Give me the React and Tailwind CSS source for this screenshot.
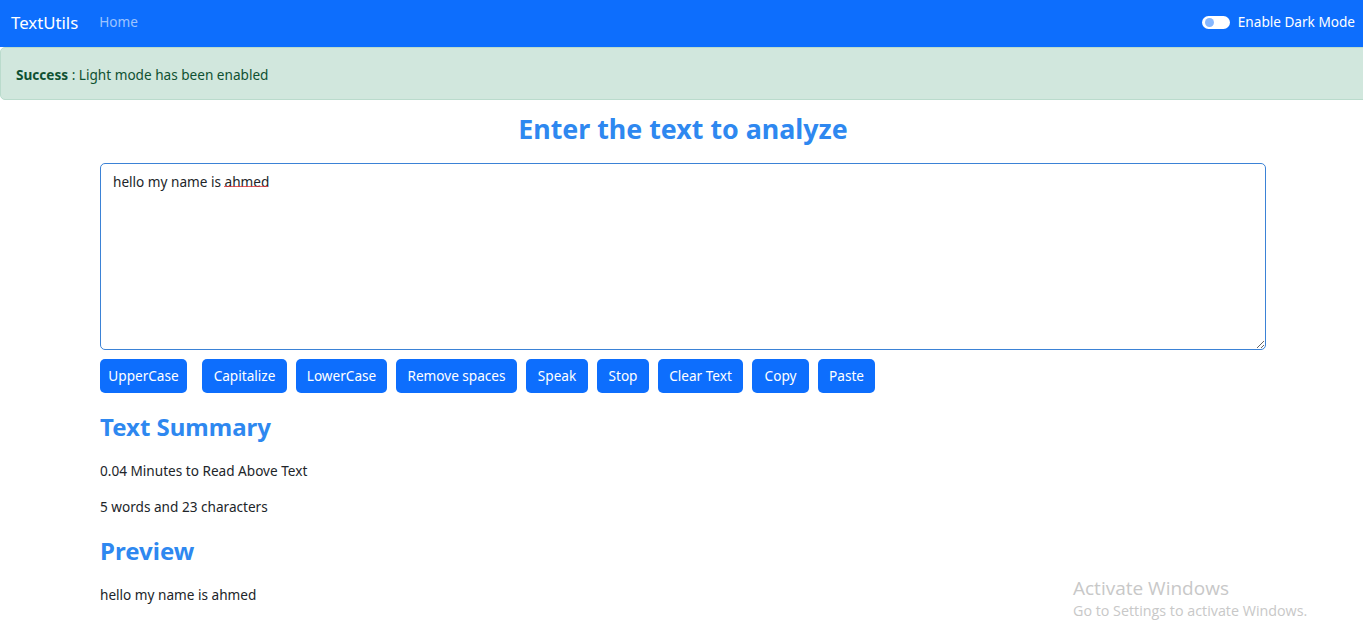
import React, { useState } from "react";

const font = { fontFamily: '"Noto Sans", "Open Sans", sans-serif' };

const buttons = [
  { label: "UpperCase", w: "w-[87px] mr-[6px]" },
  { label: "Capitalize", w: "w-[85px]" },
  { label: "LowerCase", w: "w-[91px]" },
  { label: "Remove spaces", w: "w-[121px]" },
  { label: "Speak", w: "w-[62px]" },
  { label: "Stop", w: "w-[52px]" },
  { label: "Clear Text", w: "w-[85px]" },
  { label: "Copy", w: "w-[57px]" },
  { label: "Paste", w: "w-[57px]" },
];

export default function App() {
  const [text, setText] = useState("hello my name is ahmed ");
  const words = text.split(/\s+/).filter((w) => w.length !== 0).length;

  return (
    <div className="relative min-h-[633px] bg-white text-[13.6px] text-[#212529]" style={font}>
      {/* Navbar */}
      <nav className="flex h-[47px] items-center bg-[#0d6efd] pb-[2px] pl-[11px] pr-[8px]">
        <span className="text-[16.8px] text-white">TextUtils</span>
        <span className="ml-[21px] text-[13.6px] text-white/60">Home</span>
        <div className="ml-auto flex items-center gap-[8px]">
          <span className="relative h-[13px] w-[28px] rounded-full bg-white">
            <span className="absolute left-[3px] top-[2px] h-[9px] w-[9px] rounded-full bg-[#86b7fe]" />
          </span>
          <span className="text-[13.6px] text-white">Enable Dark Mode</span>
        </div>
      </nav>

      {/* Alert */}
      <div className="mr-[-6px] flex h-[53px] items-center rounded-[5px] border border-[#badbcc] bg-[#d1e7dd] px-[15px] pt-[3px] text-[#0f5132]">
        <strong className="font-bold">Success</strong>
        <span>&nbsp;: Light mode has been enabled</span>
      </div>

      {/* Main */}
      <div className="ml-[100px] w-[1166px]">
        <h1 className="mt-[9px] text-center text-[26.8px] font-bold leading-[40px] text-[#2e88f0]">
          Enter the text to analyze
        </h1>
        <div className="relative mt-[14px]">
          <textarea
            value={text}
            onChange={(e) => setText(e.target.value)}
            spellCheck={false}
            className="block h-[187px] w-full resize-y rounded-[5px] border border-[#3b82d6] px-[12px] py-[7px] text-[13.6px] leading-[21px] text-[#212529] outline-none"
            style={font}
          />
          {/* spellcheck squiggle */}
          <svg className="pointer-events-none absolute left-[124px] top-[22px]" width="44" height="3" viewBox="0 0 44 3">
            <path d="M0 2 L1 1 L2 2 L3 1 L4 2 L5 1 L6 2 L7 1 L8 2 L9 1 L10 2 L11 1 L12 2 L13 1 L14 2 L15 1 L16 2 L17 1 L18 2 L19 1 L20 2 L21 1 L22 2 L23 1 L24 2 L25 1 L26 2 L27 1 L28 2 L29 1 L30 2 L31 1 L32 2 L33 1 L34 2 L35 1 L36 2 L37 1 L38 2 L39 1 L40 2 L41 1 L42 2 L43 1 L44 2" fill="none" stroke="#e0393e" strokeWidth="0.8" />
          </svg>
        </div>
        <div className="mt-[9px] flex gap-[9px]">
          {buttons.map((b) => (
            <button
              key={b.label}
              className={`h-[34px] whitespace-nowrap rounded-[5px] bg-[#0d6efd] text-center text-[13.6px] text-white ${b.w}`}
              style={font}
            >
              {b.label}
            </button>
          ))}
        </div>

        <h2 className="mt-[17px] text-[24px] font-bold leading-[34px] text-[#2e88f0]">Text Summary</h2>
        <p className="mt-[16px] leading-[21px]">
          {(0.008 * words).toFixed(2)} Minutes to Read Above Text
        </p>
        <p className="mt-[15px] leading-[21px]">
          {words} words and {text.length} characters
        </p>
        <h2 className="mt-[17px] text-[24px] font-bold leading-[34px] text-[#2e88f0]">Preview</h2>
        <p className="mt-[16px] leading-[21px]">{text}</p>
      </div>

      {/* Windows watermark */}
      <div className="pointer-events-none absolute left-[1073px] top-[575px] text-[#c8c8c8]" style={{ fontFamily: '"Open Sans", sans-serif' }}>
        <div className="text-[19px] leading-[26px]">Activate Windows</div>
        <div className="text-[14.3px] leading-[20px]">Go to Settings to activate Windows.</div>
      </div>
    </div>
  );
}
